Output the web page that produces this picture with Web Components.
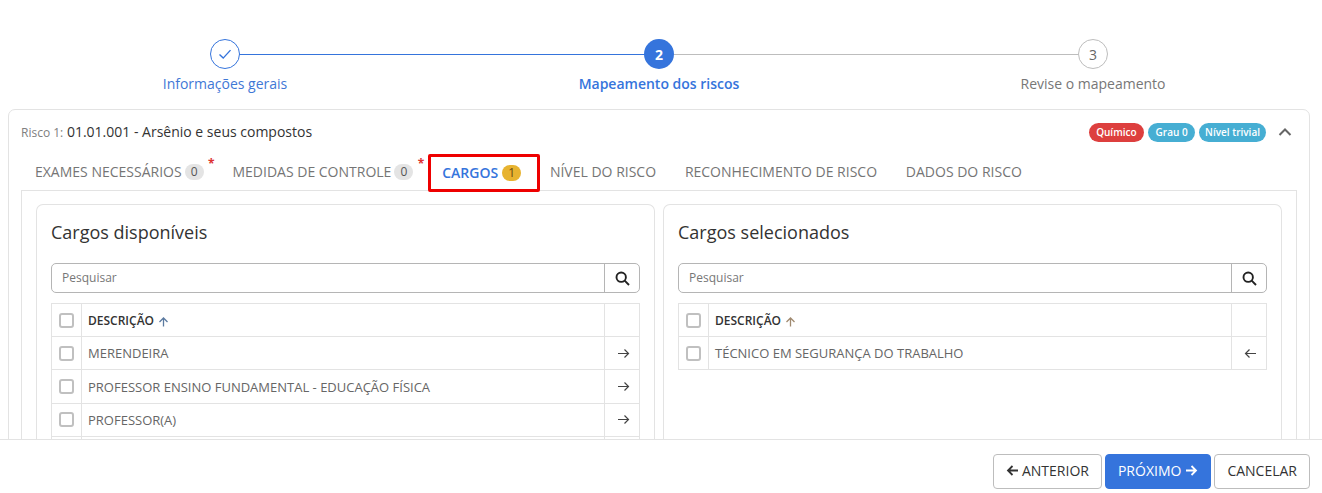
<!DOCTYPE html>
<html lang="pt-BR">
<head>
<meta charset="UTF-8">
<title>Mapeamento dos riscos</title>
<style>
    html, body { margin: 0; height: 100%; overflow: hidden; background: #fff; }
    body { font-family: "Open Sans", "Liberation Sans", sans-serif; color: #333; }
</style>
</head>
<body>
<x-app>
    <x-stepper slot="top">
        <x-step state="done" label="Informações gerais"></x-step>
        <x-step state="active" number="2" label="Mapeamento dos riscos"></x-step>
        <x-step state="todo" number="3" label="Revise o mapeamento"></x-step>
    </x-stepper>
    <x-risk-card slot="top">
        <x-tag slot="tags" color="#dd3f3e" pad="7.5">Químico</x-tag>
        <x-tag slot="tags" color="#46aed3" pad="7.5">Grau 0</x-tag>
        <x-tag slot="tags" color="#46aed3" pad="6">Nível trivial</x-tag>

        <x-tab slot="tabs" count="0" required>EXAMES NECESSÁRIOS</x-tab>
        <x-tab slot="tabs" count="0" required>MEDIDAS DE CONTROLE</x-tab>
        <x-tab slot="tabs" count="1" active>CARGOS</x-tab>
        <x-tab slot="tabs">NÍVEL DO RISCO</x-tab>
        <x-tab slot="tabs">RECONHECIMENTO DE RISCO</x-tab>
        <x-tab slot="tabs">DADOS DO RISCO</x-tab>

        <x-list-panel heading="Cargos disponíveis" sort="#5b7aa0">
            <x-row dir="right">MERENDEIRA</x-row>
            <x-row dir="right">PROFESSOR ENSINO FUNDAMENTAL - EDUCAÇÃO FÍSICA</x-row>
            <x-row dir="right">PROFESSOR(A)</x-row>
            <x-row dir="right"></x-row>
        </x-list-panel>
        <x-list-panel heading="Cargos selecionados" sort="#a08a70">
            <x-row dir="left">TÉCNICO EM SEGURANÇA DO TRABALHO</x-row>
        </x-list-panel>
    </x-risk-card>
    <x-footer slot="bottom"></x-footer>
</x-app>

<script>
    const ARROWS = {
        right: '<path d="M2 6.5h10.5M8.5 2.5l4 4-4 4"/>',
        left: '<path d="M13 6.5H2.5M6.5 2.5l-4 4 4 4"/>'
    };

    function define(name, html) {
        customElements.define(name, class extends HTMLElement {
            constructor() {
                super();
                this.attachShadow({ mode: 'open' });
            }
            connectedCallback() {
                this.shadowRoot.innerHTML = typeof html === 'function' ? html(this) : html;
            }
        });
    }

    define('x-app', `
        <style>
            :host { display: flex; flex-direction: column; height: 493px; }
            main { flex: 1; min-height: 0; overflow: hidden; padding: 39px 12px 0 8px; }
            footer { flex: none; }
        </style>
        <main><slot name="top"></slot></main>
        <footer><slot name="bottom"></slot></footer>
    `);

    define('x-stepper', `
        <style>
            :host { display: grid; grid-template-columns: repeat(3, 434px); height: 70px; }
        </style>
        <slot></slot>
    `);

    define('x-step', el => {
        const state = el.getAttribute('state');
        const inner = state === 'done'
            ? '<svg width="16" height="16" viewBox="0 0 16 16" fill="none" stroke="#3574dc" stroke-width="1.4"><path d="M2.5 8.5l3.7 3.6 7.3-8"/></svg>'
            : el.getAttribute('number');
        return `
        <style>
            :host { display: flex; flex-direction: column; align-items: center; position: relative; }
            .circle {
                width: 30px; height: 30px; box-sizing: border-box; border-radius: 50%;
                display: flex; align-items: center; justify-content: center;
                font-size: 14px; background: #fff; position: relative; z-index: 1;
            }
            .done { border: 1px solid #3574dc; }
            .active { background: #3574dc; color: #fff; font-weight: 700; }
            .todo { border: 1px solid #bdbdbd; color: #666; }
            .line { position: absolute; top: 15px; left: 50%; width: 100%; height: 1px; }
            .label { margin-top: 5px; font-size: 14px; line-height: 19px; }
            .label.done-l { color: #3f78d6; }
            .label.active-l { color: #3574dc; font-weight: 600; }
            .label.todo-l { color: #777; }
        </style>
        ${state === 'todo' ? '' : `<div class="line" style="background:${state === 'done' ? '#3574dc' : '#bdbdbd'}"></div>`}
        <div class="circle ${state}">${inner}</div>
        <div class="label ${state}-l">${el.getAttribute('label')}</div>`;
    });

    define('x-risk-card', `
        <style>
            :host {
                display: block; box-sizing: border-box; width: 1302px; height: 400px;
                border: 1px solid #e3e3e3; border-radius: 7px; background: #fff; padding: 0 12px;
            }
            .head { display: flex; align-items: center; justify-content: space-between; height: 44px; }
            .title { font-size: 14px; color: #333; padding-bottom: 2px; }
            .title small { font-size: 12px; color: #808080; }
            .right { display: flex; align-items: center; }
            .tags { display: flex; gap: 4px; }
            .chev { margin: 0 4px 0 11px; display: block; }
            .tabs { display: flex; gap: .8px; height: 36px; }
            .content {
                display: grid; grid-template-columns: 619px 619px; column-gap: 8px;
                border: 1px solid #e3e3e3; border-bottom: 0; padding: 13px 14px 0; height: 300px;
                box-sizing: border-box;
            }
        </style>
        <div class="head">
            <div class="title"><small>Risco 1:</small> 01.01.001 - Arsênio e seus compostos</div>
            <div class="right">
                <div class="tags"><slot name="tags"></slot></div>
                <svg class="chev" width="16" height="16" viewBox="0 0 16 16" fill="none" stroke="#666" stroke-width="2"><path d="M2.5 11l5.5-5.5 5.5 5.5"/></svg>
            </div>
        </div>
        <div class="tabs"><slot name="tabs"></slot></div>
        <div class="content"><slot></slot></div>
    `);

    define('x-tag', el => `
        <style>
            :host {
                display: block; height: 19px; line-height: 18px; padding: 0 ${el.getAttribute('pad')}px; border-radius: 10px;
                font-size: 10px; font-weight: 600; color: #fff; background: ${el.getAttribute('color')};
                white-space: nowrap;
            }
        </style>
        <slot></slot>
    `);

    define('x-tab', el => {
        const count = el.getAttribute('count');
        const active = el.hasAttribute('active');
        return `
        <style>
            :host {
                display: flex; align-items: center; position: relative; box-sizing: border-box;
                height: 36px; padding: 0 14px ${active ? 0 : 2}px; font-size: 14px; white-space: nowrap;
                color: ${active ? '#3574dc' : '#757575'}; font-weight: ${active ? 600 : 400};
            }
            .badge {
                width: 19px; height: 16px; line-height: 16px; margin: 1px 0 0 ${active ? 4 : 3}px; text-align: center;
                border-radius: 9px; font-size: 12px; font-weight: 400;
                background: ${active ? '#e7b330' : '#e4e4e4'}; color: ${active ? '#6a4b10' : '#555'};
            }
            .req { position: absolute; right: 3px; top: 2px; color: #dd3333; font-size: 12px; font-weight: 700; line-height: 16px; }
            .mark {
                position: absolute; left: -.6px; top: 0; width: 112px; height: 38px; box-sizing: border-box;
                border: 3px solid #ee0000; border-radius: 2px;
            }
        </style>
        <slot></slot>
        ${count !== null ? `<span class="badge">${count}</span>` : ''}
        ${el.hasAttribute('required') ? '<span class="req">*</span>' : ''}
        ${active ? '<div class="mark"></div>' : ''}`;
    });

    define('x-list-panel', el => `
        <style>
            :host {
                display: block; box-sizing: border-box; border: 1px solid #e3e3e3; border-bottom: 0;
                border-radius: 7px 7px 0 0; padding: 0 14px; height: 300px;
            }
            h2 { margin: 0; padding-top: 15px; height: 58px; box-sizing: border-box; font-size: 18px; line-height: 25px; font-weight: 400; color: #333; }
            .search { display: flex; height: 30px; box-sizing: border-box; border: 1px solid #b5b5b5; border-radius: 5px; }
            .search span { flex: 1; padding-left: 10px; font-size: 12px; line-height: 27px; color: #777; }
            .search div { width: 34px; border-left: 1px solid #b5b5b5; display: flex; align-items: center; justify-content: center; }
            .thead { display: grid; grid-template-columns: 29px 1fr 34px; margin-top: 10px; border: solid #e3e3e3; border-width: 1px 1px 0 1px; }
            .cell { display: flex; align-items: center; height: 32px; border-bottom: 1px solid #e3e3e3; }
            .desc { border-left: 1px solid #e3e3e3; border-right: 1px solid #e3e3e3; padding-left: 6px; font-size: 12px; font-weight: 600; color: #333; gap: 4px; }
            .box { box-sizing: border-box; width: 15px; height: 15px; margin-left: 7px; border: 2px solid #c0c0c0; border-radius: 3px; }
        </style>
        <h2>${el.getAttribute('heading')}</h2>
        <div class="search">
            <span>Pesquisar</span>
            <div><svg width="15" height="15" viewBox="0 0 15 15" fill="none" stroke="#222" stroke-width="1.9"><circle cx="6.2" cy="6.2" r="4.7"/><path d="M9.7 9.7l4.3 4.3"/></svg></div>
        </div>
        <div class="thead">
            <div class="cell"><div class="box"></div></div>
            <div class="cell desc"><span>DESCRIÇÃO</span><svg width="11" height="11" viewBox="0 0 11 11" fill="none" stroke="${el.getAttribute('sort')}" stroke-width="1.3" style="margin-top:2px"><path d="M5.5 10.5V2M1.5 6l4-4 4 4"/></svg></div>
            <div class="cell"></div>
        </div>
        <slot></slot>
    `);

    define('x-row', el => {
        const dir = el.getAttribute('dir');
        return `
        <style>
            :host {
                display: grid; grid-template-columns: 29px 1fr 34px; height: 33.4px; box-sizing: border-box;
                border: solid #e3e3e3; border-width: 0 1px 1px 1px; font-size: 13px; color: #666;
            }
            div { display: flex; align-items: center; }
            .desc { border-left: 1px solid #e3e3e3; border-right: 1px solid #e3e3e3; padding-left: 6px; }
            .act { justify-content: center; padding-left: 2px; }
            .box { box-sizing: border-box; width: 15px; height: 15px; margin-left: 7px; border: 2px solid #c0c0c0; border-radius: 3px; }
        </style>
        <div><div class="box"></div></div>
        <div class="desc"><slot></slot></div>
        <div class="act"><svg width="14" height="13" viewBox="0 0 14 13" fill="none" stroke="#444" stroke-width="1.2">${ARROWS[dir]}</svg></div>`;
    });

    define('x-footer', `
        <style>
            :host {
                display: flex; justify-content: flex-end; align-items: flex-start; gap: 3px;
                height: 54px; box-sizing: border-box; border-top: 1px solid #e3e3e3; background: #fff;
                padding: 14px 12px 0 0;
            }
            button {
                height: 35px; box-sizing: border-box; border: 1px solid #bdbdbd; border-radius: 4px; background: #fff;
                font: 14px "Open Sans", "Liberation Sans", sans-serif; color: #333; display: flex; align-items: center; gap: 3px;
                padding: 0 12px 2px;
            }
            .primary { background: #3574dc; border-color: #3574dc; color: #fff; gap: 4px; }
        </style>
        <button><svg width="13" height="13" viewBox="0 0 13 13" fill="none" stroke="#333" stroke-width="1.8"><path d="M12 6.5H2M6.5 2l-4.5 4.5 4.5 4.5"/></svg>ANTERIOR</button>
        <button class="primary">PRÓXIMO<svg width="13" height="13" viewBox="0 0 13 13" fill="none" stroke="#fff" stroke-width="1.8"><path d="M1 6.5h10M6.5 2l4.5 4.5-4.5 4.5"/></svg></button>
        <button>CANCELAR</button>
    `);
</script>
</body>
</html>
